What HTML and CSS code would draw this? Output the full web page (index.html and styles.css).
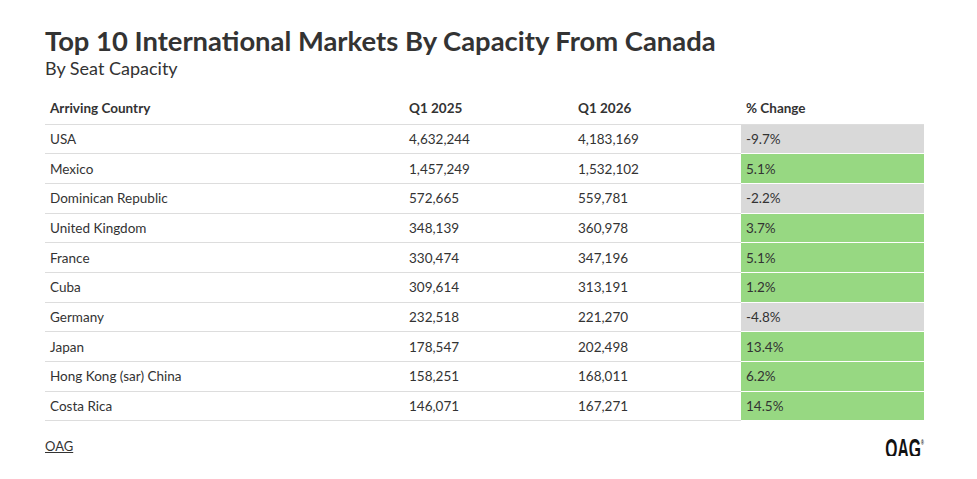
FILE: index.html
```html
<!DOCTYPE html>
<html>
<head>
<meta charset="utf-8">
<link rel="stylesheet" href="styles.css">
</head>
<body>
<div class="chart">
  <h1 class="title">Top 10 International Markets By Capacity From Canada</h1>
  <p class="subtitle">By Seat Capacity</p>
  <table class="data">
    <colgroup>
      <col class="c1"><col class="c2"><col class="c3"><col class="c4">
    </colgroup>
    <thead>
      <tr><th>Arriving Country</th><th>Q1 2025</th><th>Q1 2026</th><th>% Change</th></tr>
    </thead>
    <tbody>
      <tr><td>USA</td><td>4,632,244</td><td>4,183,169</td><td class="neg">-9.7%</td></tr>
      <tr><td>Mexico</td><td>1,457,249</td><td>1,532,102</td><td class="pos">5.1%</td></tr>
      <tr><td>Dominican Republic</td><td>572,665</td><td>559,781</td><td class="neg">-2.2%</td></tr>
      <tr><td>United Kingdom</td><td>348,139</td><td>360,978</td><td class="pos">3.7%</td></tr>
      <tr><td>France</td><td>330,474</td><td>347,196</td><td class="pos">5.1%</td></tr>
      <tr><td>Cuba</td><td>309,614</td><td>313,191</td><td class="pos">1.2%</td></tr>
      <tr><td>Germany</td><td>232,518</td><td>221,270</td><td class="neg">-4.8%</td></tr>
      <tr><td>Japan</td><td>178,547</td><td>202,498</td><td class="pos">13.4%</td></tr>
      <tr><td>Hong Kong (sar) China</td><td>158,251</td><td>168,011</td><td class="pos">6.2%</td></tr>
      <tr><td>Costa Rica</td><td>146,071</td><td>167,271</td><td class="pos">14.5%</td></tr>
    </tbody>
  </table>
  <div class="footer">
    <a class="source" href="#">OAG</a>
    <span class="logo">OAG<sup>®</sup></span>
  </div>
</div>
</body>
</html>
```
FILE: styles.css
```css
* { box-sizing: border-box; }
body {
  margin: 0;
  background: #fff;
  font-family: Lato, "Noto Sans", sans-serif;
  color: #333;
}
.chart {
  padding: 25px 53px 0 45px;
}
.title {
  margin: 0;
  font-size: 27.4px;
  line-height: 31px;
  font-weight: 700;
  color: #333;
}
.subtitle {
  margin: 0 0 13px;
  font-size: 18px;
  line-height: 24px;
  color: #333;
}
.data {
  width: 879px;
  border-collapse: collapse;
  table-layout: fixed;
  font-size: 13.5px;
}
.c1 { width: 359px; }
.c2 { width: 169px; }
.c3 { width: 168px; }
.c4 { width: 183px; }
.data th {
  text-align: left;
  font-weight: 700;
  height: 31px;
  padding: 0 5px;
  border-bottom: 1px solid #ddd;
}
.data td {
  height: 29.7px;
  padding: 0 5px;
  border-bottom: 1px solid #ddd;
}
.data td.neg { background: #d9d9d9; border-bottom-color: #fff; }
.data td.pos { background: #97d882; border-bottom-color: #fff; }
.footer {
  display: flex;
  justify-content: space-between;
  align-items: center;
  height: 20px;
  margin-top: 15px;
}
.source {
  color: #333;
  font-size: 13px;
  line-height: 16px;
}
.logo {
  display: inline-block;
  font-family: "Liberation Sans", Arial, sans-serif;
  font-weight: 700;
  font-size: 28px;
  line-height: 20px;
  color: #111;
  transform: scaleX(0.56);
  transform-origin: right center;
}
.logo sup { font-size: 7px; vertical-align: 13px; }
```
